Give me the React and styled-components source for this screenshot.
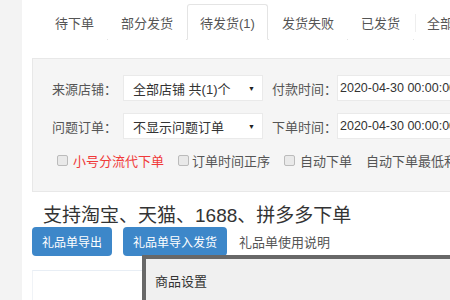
import styled, {createGlobalStyle} from 'styled-components';

const tabs = ['待下单', '部分发货', '待发货(1)', '发货失败', '已发货', '全部'];

const App = () => {
  return (
    <Page>
      <GlobalStyle />
      <Side />
      <Main>
        <TabBar>
          {tabs.map((t, idx) => (
            <Tab key={idx} active={idx === 2} divided={idx === 5}>
              {t}
            </Tab>
          ))}
        </TabBar>

        <Filter>
          <Row>
            <Label>来源店铺：</Label>
            <Select>
              <span>全部店铺 共(1)个</span>
              <Arrow>▼</Arrow>
            </Select>
            <Label gap>付款时间：</Label>
            <Input>2020-04-30 00:00:00</Input>
          </Row>
          <Row>
            <Label>问题订单：</Label>
            <Select>
              <span>不显示问题订单</span>
              <Arrow>▼</Arrow>
            </Select>
            <Label gap>下单时间：</Label>
            <Input>2020-04-30 00:00:00</Input>
          </Row>
          <CheckRow>
            <Check>
              <Box />
              <CheckText red>小号分流代下单</CheckText>
            </Check>
            <Check tight>
              <Box />
              <CheckText>订单时间正序</CheckText>
            </Check>
            <Check>
              <Box />
              <CheckText>自动下单</CheckText>
            </Check>
            <CheckText>自动下单最低利润</CheckText>
          </CheckRow>
        </Filter>

        <Heading>支持淘宝、天猫、1688、拼多多下单</Heading>
        <Actions>
          <BlueButton>礼品单导出</BlueButton>
          <BlueButton>礼品单导入发货</BlueButton>
          <LinkText>礼品单使用说明</LinkText>
        </Actions>
        <Lower>
          <LeftCard />
        </Lower>
      </Main>

      <Modal>
        <ModalHead>商品设置</ModalHead>
      </Modal>
    </Page>
  );
};

export default App;

const GlobalStyle = createGlobalStyle`
  html, body {
    margin: 0;
    padding: 0;
    overflow: hidden;
    background: #fff;
  }
  body {
    font-family: "Liberation Sans", "Noto Sans CJK SC", sans-serif;
    color: #555;
  }
`;

const Page = styled.div`
  position: relative;
  display: flex;
  width: 700px;
  height: 300px;
  overflow: hidden;
`;

const Side = styled.div`
  width: 22px;
  flex: none;
  background: #f3f3f3;
`;

const Main = styled.div`
  flex: 1;
  padding-left: 10px;
  display: flex;
  flex-direction: column;
`;

const TabBar = styled.div`
  display: flex;
  margin: 4px 0 0 10px;
  border-bottom: 1px solid #e4e4e4;
  height: 35px;
`;

const Tab = styled.div`
  display: flex;
  align-items: center;
  padding: 0 12px;
  margin-right: 1px;
  font-size: 13px;
  color: #555;
  margin-bottom: -1px;
  border: 1px solid ${({active}) => (active ? '#e4e4e4' : 'transparent')};
  border-bottom-color: ${({active}) => (active ? '#fff' : 'transparent')};
  border-radius: 3px 3px 0 0;
  background: #fff;
  position: relative;
  ${({divided}) =>
    divided &&
    `&:before {
      content: '';
      position: absolute;
      left: 0;
      top: 9px;
      height: 18px;
      border-left: 1px solid #eee;
    }`}
`;

const Filter = styled.div`
  margin-top: 18px;
  height: 134px;
  box-sizing: border-box;
  background: #f5f5f5;
  border: 1px solid #e8e8e8;
  border-right: none;
  padding: 16px 0 0 19px;
`;

const Row = styled.div`
  display: flex;
  align-items: center;
  height: 26px;
  margin-bottom: 12px;
`;

const Label = styled.div`
  font-size: 13px;
  color: #555;
  width: ${({gap}) => (gap ? '65px' : '71px')};
  margin-left: ${({gap}) => (gap ? '9px' : '0')};
  white-space: nowrap;
`;

const Select = styled.div`
  width: 140px;
  height: 26px;
  box-sizing: border-box;
  background: #fff;
  border: 1px solid #eaeaea;
  display: flex;
  align-items: center;
  justify-content: space-between;
  padding: 0 7px 0 9px;
  font-size: 13px;
  color: #333;
`;

const Arrow = styled.span`
  font-size: 7px;
  color: #222;
`;

const Input = styled.div`
  width: 160px;
  height: 26px;
  box-sizing: border-box;
  background: #fff;
  border: 1px solid #eaeaea;
  padding-left: 2px;
  display: flex;
  align-items: center;
  font-size: 12.5px;
  color: #333;
  white-space: nowrap;
`;

const CheckRow = styled.div`
  display: flex;
  align-items: center;
  margin: 4px 0 0 5px;
  white-space: nowrap;
`;

const Check = styled.div`
  display: flex;
  align-items: center;
  gap: ${({tight}) => (tight ? '3px' : '5px')};
  margin-right: 14px;
`;

const Box = styled.span`
  width: 9px;
  height: 9px;
  border: 1px solid #bbb;
  border-radius: 2px;
  background: #e9e9e9;
`;

const CheckText = styled.span`
  font-size: 13px;
  color: ${({red}) => (red ? '#f03a3a' : '#555')};
`;

const Heading = styled.div`
  margin: 13px 0 0 11px;
  font-size: 19px;
  line-height: 22px;
  color: #333;
  white-space: nowrap;
`;

const Actions = styled.div`
  display: flex;
  align-items: center;
  gap: 11px;
  margin-top: 0;
`;

const BlueButton = styled.div`
  height: 29px;
  padding: 0 10px;
  display: flex;
  align-items: center;
  background: #3d87c9;
  border-radius: 4px;
  color: #fff;
  font-size: 12px;
`;

const LinkText = styled.span`
  font-size: 13px;
  color: #555;
  margin-left: 1px;
`;

const Lower = styled.div`
  margin-top: 14px;
  flex: 1;
`;

const LeftCard = styled.div`
  width: 120px;
  height: 100%;
  border-top: 1px solid #e8eef5;
  border-left: 1px solid #f0f3f7;
  background: #fff;
`;

const Modal = styled.div`
  position: absolute;
  left: 142px;
  top: 255px;
  right: 0;
  bottom: 0;
  border-top: 4px solid #686868;
  border-left: 4px solid #686868;
  background: #f0f0f0;
`;

const ModalHead = styled.div`
  padding: 12px 0 0 9px;
  font-size: 13px;
  color: #333;
`;
